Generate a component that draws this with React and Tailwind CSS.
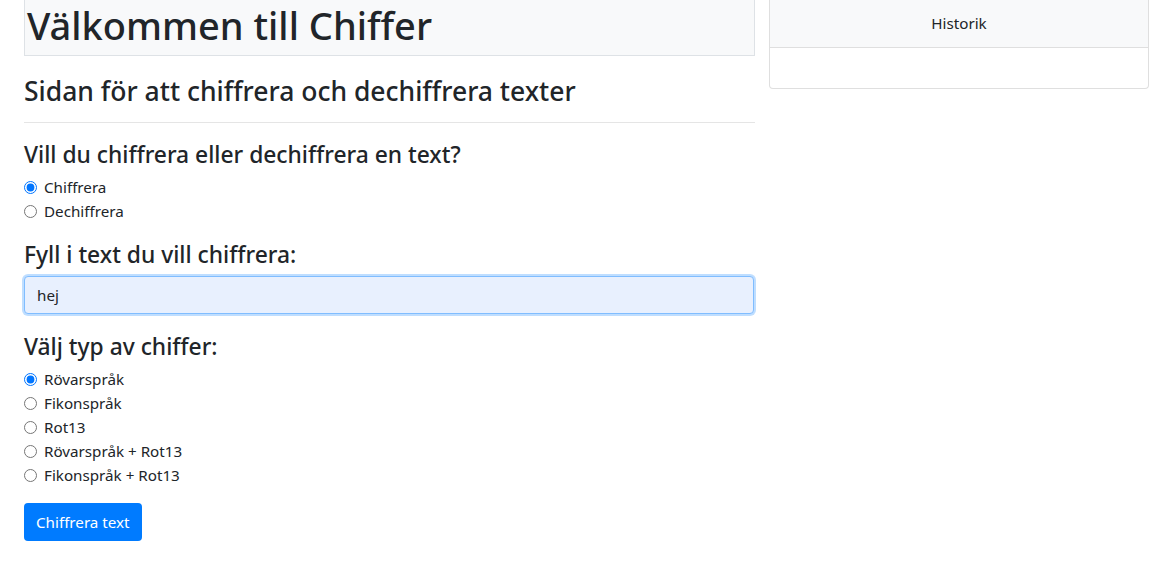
export default function App() {
    const modes = ['Chiffrera', 'Dechiffrera'];
    const ciphers = ['Rövarspråk', 'Fikonspråk', 'Rot13', 'Rövarspråk + Rot13', 'Fikonspråk + Rot13'];

    return (
        <div
            className="w-[1158px] h-[578px] bg-white text-[#212529] flex gap-[14px] pl-[24px]"
            style={{ fontFamily: '"Noto Sans", "Open Sans", sans-serif' }}
        >
            {/* Main column */}
            <div className="w-[731px] flex flex-col">
                <div className="h-[56px] bg-[#f8f9fa] border-x border-b border-[#dee2e6] pt-[3px]">
                    <h1 className="text-[38px] leading-[44px] font-medium pl-[2px]">Välkommen till Chiffer</h1>
                </div>

                <h3 className="text-[26.5px] leading-[32px] font-medium mt-[19px]">
                    Sidan för att chiffrera och dechiffrera texter
                </h3>
                <div className="h-px bg-[#e5e5e5] mt-[15px]" />

                <h4 className="text-[22.8px] leading-[28px] font-medium mt-[18px]">
                    Vill du chiffrera eller dechiffrera en text?
                </h4>
                <div className="mt-[6px] flex flex-col">
                    {modes.map((m, i) => (
                        <label key={m} className="h-[24px] flex items-center text-[15.2px]">
                            <input
                                type="radio"
                                name="mode"
                                defaultChecked={i === 0}
                                className="w-[13px] h-[13px] m-0 mr-[7px]"
                            />
                            {m}
                        </label>
                    ))}
                </div>

                <h4 className="text-[22.8px] leading-[28px] font-medium mt-[18px]">Fyll i text du vill chiffrera:</h4>
                <input
                    type="text"
                    defaultValue="hej"
                    className="mt-[7px] h-[38px] w-[730px] rounded-[4px] border border-[#80bdff] bg-[#e8f0fe] px-[12px] text-[15.2px] outline-none shadow-[0_0_0_2px_rgba(0,123,255,0.25)]"
                />

                <h4 className="text-[22.8px] leading-[28px] font-medium mt-[19px]">Välj typ av chiffer:</h4>
                <div className="mt-[6px] flex flex-col">
                    {ciphers.map((c, i) => (
                        <label key={c} className="h-[24px] flex items-center text-[15.2px]">
                            <input
                                type="radio"
                                name="cipher"
                                defaultChecked={i === 0}
                                className="w-[13px] h-[13px] m-0 mr-[7px]"
                            />
                            {c}
                        </label>
                    ))}
                </div>

                <div className="mt-[16px]">
                    <button className="h-[38px] px-[12px] rounded-[4px] bg-[#007bff] text-white text-[15.2px]">
                        Chiffrera text
                    </button>
                </div>
            </div>

            {/* History card */}
            <div className="w-[380px] self-start border-x border-b border-[#dfdfdf] rounded-b-[4px] flex flex-col">
                <div className="h-[48px] bg-[#f8f9fa] border-b border-[#dfdfdf] flex items-center justify-center text-[15.2px]">
                    Historik
                </div>
                <div className="h-[40px]" />
            </div>
        </div>
    );
}
